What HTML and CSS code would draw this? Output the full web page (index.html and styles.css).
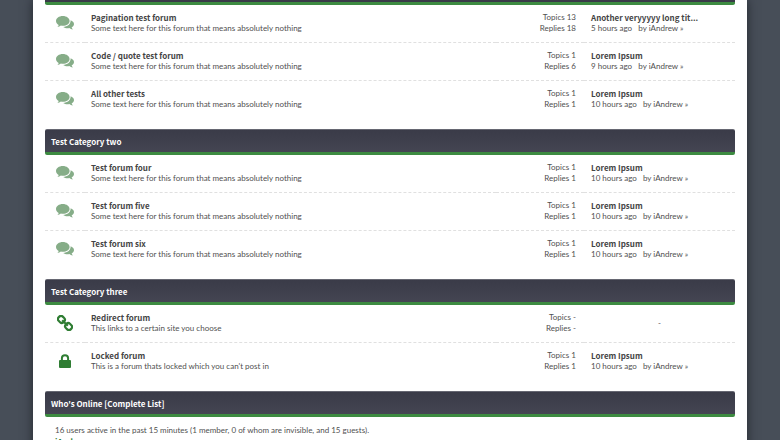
FILE: index.html
```
<!DOCTYPE html>
<html lang="en">
<head>
<meta charset="UTF-8">
<title>Forum index</title>
<link rel="stylesheet" href="styles.css">
</head>
<body>
<svg class="defs" aria-hidden="true">
 <symbol id="comments" viewBox="0 0 18 14">
  <path d="M6.800 0C3 0 0 2.200 0 4.900c0 1.700 1.100 3.100 2.700 4-.3.8-.8 1.500-1.400 2.100 1.400-.1 2.600-.6 3.600-1.400.6.1 1.300.2 1.900.2 3.800 0 6.800-2.200 6.800-4.900S10.600 0 6.800 0z"/>
  <path d="M14.600 4.200C15 7.800 11.400 10.800 7.200 10.900c1.200.9 2.700 1.400 4.300 1.400.6 0 1.200-.1 1.800-.2 1 .8 2.200 1.300 3.700 1.500-.6-.6-1.100-1.300-1.400-2.100C17.100 10.800 18 9.500 18 8c0-1.700-1.500-3.100-3.400-3.800z"/>
 </symbol>
 <symbol id="chain" viewBox="0 0 16 16">
  <g fill="none" stroke="currentColor" stroke-width="2.200">
   <rect x="-3.400" y="-2.900" width="6.800" height="5.800" rx="2.400" transform="translate(4.400 4.400) rotate(45)"/>
   <rect x="-3.400" y="-2.900" width="6.800" height="5.800" rx="2.400" transform="translate(11.600 11.600) rotate(45)"/>
   <path d="M5.200 5.200l5.600 5.600"/>
  </g>
 </symbol>
 <symbol id="lock" viewBox="0 0 12 14">
  <path d="M2.900 7V4.300a3.100 3.100 0 0 1 6.200 0V7" fill="none" stroke="currentColor" stroke-width="2"/>
  <rect y="6" width="12" height="8" rx="1"/>
 </symbol>
</svg>
<div class="wrapper">
 <div class="thead-end"></div>
 <table class="forums">
  <tr>
   <td class="status"><svg class="comments"><use href="#comments"/></svg></td>
   <td class="forum"><a class="title" href="#">Pagination test forum</a>Some text here for this forum that means absolutely nothing</td>
   <td class="stats">Topics 13<br>Replies 18</td>
   <td class="last"><a class="title" href="#">Another veryyyyy long tit...</a>5 hours ago &nbsp; by <a href="#">iAndrew</a> »</td>
  </tr>
  <tr>
   <td class="status"><svg class="comments"><use href="#comments"/></svg></td>
   <td class="forum"><a class="title" href="#">Code / quote test forum</a>Some text here for this forum that means absolutely nothing</td>
   <td class="stats">Topics 1<br>Replies 6</td>
   <td class="last"><a class="title" href="#">Lorem Ipsum</a>9 hours ago &nbsp; by <a href="#">iAndrew</a> »</td>
  </tr>
  <tr>
   <td class="status"><svg class="comments"><use href="#comments"/></svg></td>
   <td class="forum"><a class="title" href="#">All other tests</a>Some text here for this forum that means absolutely nothing</td>
   <td class="stats">Topics 1<br>Replies 1</td>
   <td class="last"><a class="title" href="#">Lorem Ipsum</a>10 hours ago &nbsp; by <a href="#">iAndrew</a> »</td>
  </tr>
 </table>

 <h2 class="thead"><a href="#">Test Category two</a></h2>
 <table class="forums">
  <tr>
   <td class="status"><svg class="comments"><use href="#comments"/></svg></td>
   <td class="forum"><a class="title" href="#">Test forum four</a>Some text here for this forum that means absolutely nothing</td>
   <td class="stats">Topics 1<br>Replies 1</td>
   <td class="last"><a class="title" href="#">Lorem Ipsum</a>10 hours ago &nbsp; by <a href="#">iAndrew</a> »</td>
  </tr>
  <tr>
   <td class="status"><svg class="comments"><use href="#comments"/></svg></td>
   <td class="forum"><a class="title" href="#">Test forum five</a>Some text here for this forum that means absolutely nothing</td>
   <td class="stats">Topics 1<br>Replies 1</td>
   <td class="last"><a class="title" href="#">Lorem Ipsum</a>10 hours ago &nbsp; by <a href="#">iAndrew</a> »</td>
  </tr>
  <tr>
   <td class="status"><svg class="comments"><use href="#comments"/></svg></td>
   <td class="forum"><a class="title" href="#">Test forum six</a>Some text here for this forum that means absolutely nothing</td>
   <td class="stats">Topics 1<br>Replies 1</td>
   <td class="last"><a class="title" href="#">Lorem Ipsum</a>10 hours ago &nbsp; by <a href="#">iAndrew</a> »</td>
  </tr>
 </table>

 <h2 class="thead"><a href="#">Test Category three</a></h2>
 <table class="forums">
  <tr>
   <td class="status"><svg class="chain"><use href="#chain"/></svg></td>
   <td class="forum"><a class="title" href="#">Redirect forum</a>This links to a certain site you choose</td>
   <td class="stats">Topics -<br>Replies -</td>
   <td class="last none">-</td>
  </tr>
  <tr>
   <td class="status"><svg class="lock"><use href="#lock"/></svg></td>
   <td class="forum"><a class="title" href="#">Locked forum</a>This is a forum thats locked which you can't post in</td>
   <td class="stats">Topics 1<br>Replies 1</td>
   <td class="last"><a class="title" href="#">Lorem Ipsum</a>10 hours ago &nbsp; by <a href="#">iAndrew</a> »</td>
  </tr>
 </table>

 <h2 class="thead">Who's Online [<a href="#">Complete List</a>]</h2>
 <p class="online">16 users active in the past 15 minutes (1 member, 0 of whom are invisible, and 15 guests).<br><a class="member" href="#">iAndrew</a></p>
</div>
</body>
</html>
```
FILE: styles.css
```
body {
 height: 100vh;
 margin: 0;
 overflow: hidden;
 background: #474e58;
 color: #505050;
 font: 8px/11px Lato, sans-serif;
}
a {
 color: inherit;
 text-decoration: none;
}
.defs {
 display: none;
}
.wrapper {
 min-height: 100vh;
 margin: 0 33px;
 padding: 0 12px;
 box-sizing: border-box;
 background: #fff;
 box-shadow: 0 0 10px #23272e;
}
/* category bars */
.thead-end {
 height: 2px;
 background: #393a47;
 border-bottom: 3px solid #3d8b41;
 border-radius: 0 0 2px 2px;
}
.thead {
 margin: 11px 0 0;
 padding: 1px 6px 0;
 background: linear-gradient(#3a3b48, #444552);
 border-top: 1px solid #666772;
 border-bottom: 3px solid #3d8b41;
 border-radius: 2px;
 color: #fff;
 font: bold 8px/21px "Noto Sans CJK SC", sans-serif;
}
/* forum rows */
.forums {
 width: 100%;
 border-collapse: separate;
 border-spacing: 0;
 table-layout: fixed;
}
.forums td {
 padding: 7px 0 8px;
 border-bottom: 1px dashed #e0e0e0;
 vertical-align: top;
}
.forums tr:last-child td {
 border-bottom: 0;
}
.forums .status {
 width: 40px;
 vertical-align: middle;
}
.forums .forum {
 padding-left: 6px;
}
.forums .stats {
 width: 80px;
 padding-right: 8px;
 text-align: right;
}
.forums .last {
 width: 144px;
 padding-left: 7px;
 white-space: nowrap;
}
.forums .none {
 padding-left: 0;
 width: 151px;
 text-align: center;
 vertical-align: middle;
}
.title {
 display: block;
 color: #444;
 font: bold 8px/11px "Noto Sans CJK SC", sans-serif;
}
.status svg {
 display: block;
 margin: 0 auto;
 fill: currentColor;
 color: #2f7d33;
}
.status .comments {
 width: 18px;
 height: 14px;
 color: #86ad88;
}
.status .chain {
 width: 16px;
 height: 16px;
}
.status .lock {
 width: 12px;
 height: 14px;
}
.online {
 margin: 0;
 padding: 8px 10px;
}
.member {
 color: #2f7d33;
 font: bold 8px/11px "Noto Sans CJK SC", sans-serif;
}
```
